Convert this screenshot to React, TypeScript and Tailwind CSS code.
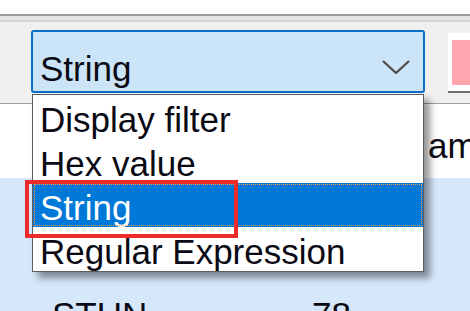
const options = ["Display filter", "Hex value", "String", "Regular Expression"];

export default function App() {
  const selected = "String";
  return (
    <div className="relative w-[470px] h-[311px] overflow-hidden bg-white font-['Liberation_Sans',Arial,sans-serif] text-[35px] text-[#0a0a14]">
      {/* window chrome lines */}
      <div className="h-[14px] bg-white" />
      <div className="h-[2px] bg-[#9b9b9b]" />
      <div className="h-[4px] bg-[#e4e4e4]" />
      <div className="h-[2px] bg-[#d2d2d2]" />

      {/* search toolbar */}
      <div className="h-[82px] bg-[#f0f0f0] border-b border-[#a0a0a0] flex items-start pt-[8px] pl-[31px]">
        <div className="w-[394px] h-[63px] shrink-0 rounded-[3px] border-2 border-[#0a6cc9] bg-[#cce4f7] flex items-start justify-between pl-[7px] pr-[13px]">
          <span className="pt-[18px] leading-[38px]">{selected}</span>
          <svg className="mt-[28px]" width="28" height="14" viewBox="0 0 28 14" fill="none">
            <polyline points="1,1 14,13 27,1" stroke="#4a4a4a" strokeWidth="2.2" />
          </svg>
        </div>
        <div className="ml-[23px] mt-[3px] w-[30px] h-[60px] shrink-0 bg-white border-b-2 border-[#727272] pt-[7px] pl-[4px]">
          <div className="h-[45px] bg-[#ffa6ae]" />
        </div>
      </div>

      {/* packet list behind */}
      <div className="h-[74px] bg-white pl-[428px] pt-[23px] leading-[38px] whitespace-nowrap">am</div>
      <div className="h-[133px] bg-[#d5e7f9] pt-[118px] pl-[52px] grid grid-cols-[260px_auto] leading-[38px]">
        <span>STUN</span>
        <span>78</span>
      </div>

      {/* open dropdown */}
      <div className="absolute left-[32px] top-[94px] w-[392px] border-[1.5px] border-[#5e5e5e] bg-white shadow-[6px_6px_7px_rgba(0,0,0,0.42)]">
        {options.map((o) => (
          <div
            key={o}
            className={
              o === selected
                ? "h-[44px] pt-[6px] pl-[7px] leading-[38px] whitespace-nowrap bg-[#0078d7] text-white outline-1 outline-dotted outline-[#f0a050] outline-offset-[-2px]"
                : "h-[44px] pt-[6px] pl-[7px] leading-[38px] whitespace-nowrap"
            }
          >
            {o}
          </div>
        ))}
      </div>

      {/* annotation */}
      <div className="absolute left-[25px] top-[180px] w-[213px] h-[58px] border-4 border-[#ee2b2b]" />
    </div>
  );
}
